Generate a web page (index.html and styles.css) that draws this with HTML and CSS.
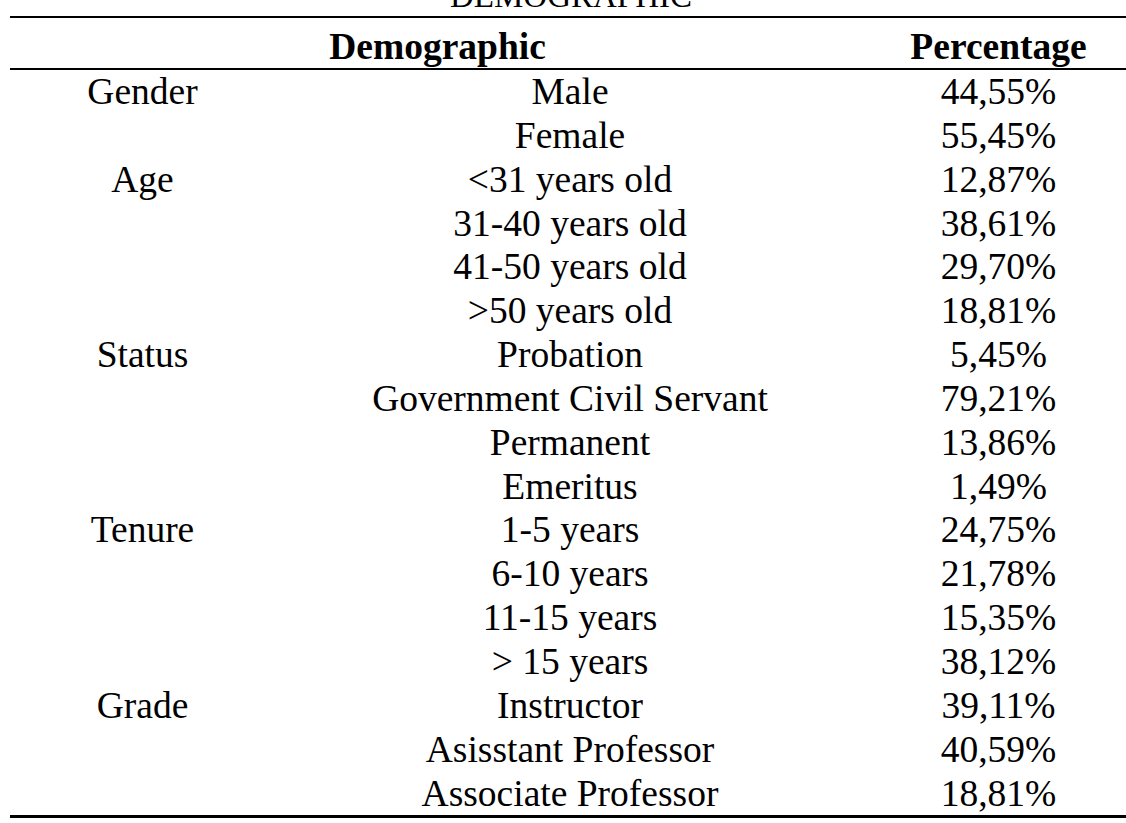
FILE: index.html
```html
<!DOCTYPE html>
<html lang="en">
<head>
<meta charset="utf-8">
<title>Demographic</title>
<link rel="stylesheet" href="styles.css">
</head>
<body>
<div class="page">
  <div class="title">DEMOGRAPHIC</div>
  <table class="demo">
    <colgroup>
      <col class="c1">
      <col class="c2">
      <col class="c3">
    </colgroup>
    <thead>
      <tr><th colspan="2">Demographic</th><th>Percentage</th></tr>
    </thead>
    <tbody>
      <tr><td>Gender</td><td>Male</td><td>44,55%</td></tr>
      <tr><td></td><td>Female</td><td>55,45%</td></tr>
      <tr><td>Age</td><td>&lt;31 years old</td><td>12,87%</td></tr>
      <tr><td></td><td>31-40 years old</td><td>38,61%</td></tr>
      <tr><td></td><td>41-50 years old</td><td>29,70%</td></tr>
      <tr><td></td><td>&gt;50 years old</td><td>18,81%</td></tr>
      <tr><td>Status</td><td>Probation</td><td>5,45%</td></tr>
      <tr><td></td><td>Government Civil Servant</td><td>79,21%</td></tr>
      <tr><td></td><td>Permanent</td><td>13,86%</td></tr>
      <tr><td></td><td>Emeritus</td><td>1,49%</td></tr>
      <tr><td>Tenure</td><td>1-5 years</td><td>24,75%</td></tr>
      <tr><td></td><td>6-10 years</td><td>21,78%</td></tr>
      <tr><td></td><td>11-15 years</td><td>15,35%</td></tr>
      <tr><td></td><td>&gt; 15 years</td><td>38,12%</td></tr>
      <tr><td>Grade</td><td>Instructor</td><td>39,11%</td></tr>
      <tr><td></td><td>Asisstant Professor</td><td>40,59%</td></tr>
      <tr><td></td><td>Associate Professor</td><td>18,81%</td></tr>
    </tbody>
  </table>
</div>
</body>
</html>
```
FILE: styles.css
```css
html, body {
  margin: 0;
  padding: 0;
  background: #ffffff;
  overflow: hidden;
}

.page {
  width: 1140px;
  padding-left: 10px;
  font-family: "Liberation Serif", "Times New Roman", serif;
  color: #000000;
}

.title {
  width: 1122px;
  margin: -12px 0 12px;
  height: 16px;
  line-height: 16px;
  font-size: 33px;
  text-align: center;
  white-space: nowrap;
}

.demo {
  width: 1122px;
  table-layout: fixed;
  border-collapse: collapse;
  border-top: 2px solid #000;
  border-bottom: 3px solid #000;
  font-size: 37.5px;
}

.c1 { width: 265px; }
.c2 { width: 590px; }
.c3 { width: 267px; }

.demo th {
  font-weight: bold;
  text-align: center;
  padding: 8px 0 0;
  line-height: 42px;
  border-bottom: 2px solid #000;
  white-space: nowrap;
}

.demo td {
  text-align: center;
  padding: 0;
  line-height: 43.85px;
  white-space: nowrap;
}
```
